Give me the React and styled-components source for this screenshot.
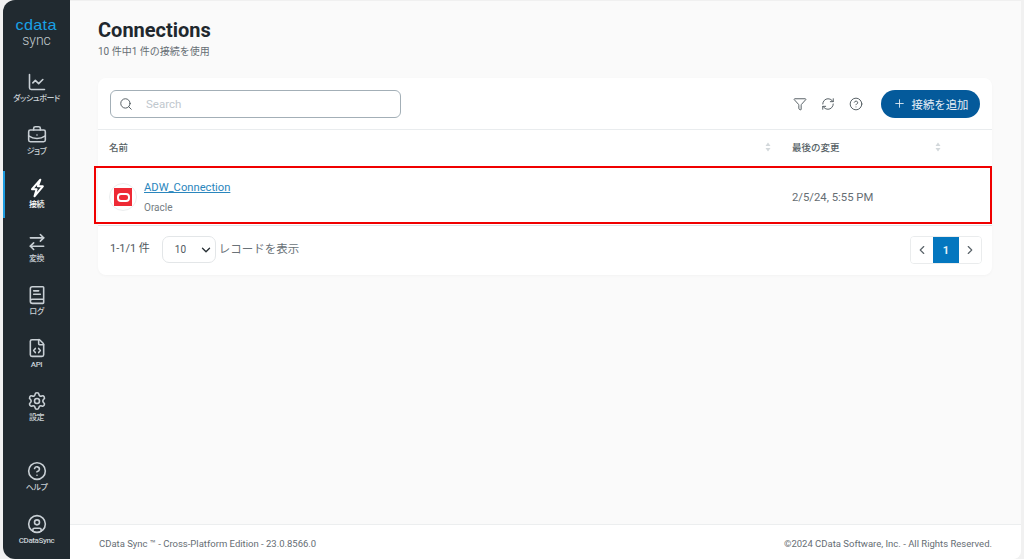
import React from 'react';
import styled, { createGlobalStyle } from 'styled-components';
import {
  ChartLine, BriefcaseBusiness, ArrowRightLeft, BookText, FileCode, Settings,
  CircleHelp, CircleUser, Search, Funnel, RefreshCw, Plus, ChevronDown, ChevronLeft, ChevronRight,
} from 'lucide-react';

const font = `Roboto, 'Noto Sans CJK JP', sans-serif`;

const Global = createGlobalStyle`
  html, body { margin: 0; padding: 0; background: #fff; }
  #root { height: 559px; overflow: hidden; }
  * { box-sizing: border-box; }
  body { font-family: ${font}; }
`;

const Shell = styled.div`
  display: flex;
  height: 559px;
  width: 1024px;
  padding: 0 3px 0 3px;
  background: #f1f1f1;
`;

const Sidebar = styled.nav`
  width: 67px;
  flex: none;
  display: flex;
  flex-direction: column;
  background: #212a30;
  border-radius: 12px 0 0 12px;
`;

const Brand = styled.div`
  height: 55px;
  padding-top: 17px;
  display: flex;
  flex-direction: column;
  align-items: center;
`;

const BrandMark = styled.span`
  font-family: 'Liberation Sans', sans-serif;
  font-size: 15px;
  line-height: 15px;
  font-weight: 400;
  letter-spacing: 0.3px;
  color: #19a1e6;
  transform: scaleX(1.08);
`;

const BrandSub = styled.span`
  font-size: 14px;
  line-height: 16px;
  font-weight: 300;
  color: #c3cacf;
`;

const NavList = styled.div`
  display: flex;
  flex-direction: column;
  padding-top: 6px;
`;

const NavItem = styled.a`
  position: relative;
  height: 53.3px;
  display: flex;
  flex-direction: column;
  align-items: center;
  justify-content: center;
  gap: 1px;
  color: ${(p) => (p.$active ? '#ffffff' : '#c9d0d5')};
  font-size: 8px;
  line-height: 11px;
  font-weight: 500;
  letter-spacing: -0.4px;
  font-feature-settings: 'palt';

  ${(p) => p.$active && `
    &::before {
      content: '';
      position: absolute;
      left: 0;
      top: 3px;
      bottom: 3px;
      width: 2px;
      background: #1c9ce0;
    }
  `}
`;

const NavBottom = styled(NavList)`
  margin-top: auto;
  padding: 0 0 2px;
`;

const Main = styled.main`
  flex: 1;
  min-width: 0;
  display: flex;
  flex-direction: column;
  background: #fafafa;
  border-top: 1px solid #f0f0f0;
  border-radius: 0 0 8px 0;
  overflow: hidden;
`;

const Content = styled.div`
  flex: 1;
  padding: 17px 29px 0 28px;
`;

const Title = styled.h1`
  margin: 0;
  font-size: 20px;
  line-height: 24px;
  font-weight: 700;
  color: #1f282e;
`;

const Subtitle = styled.p`
  margin: 3px 0 0;
  font-size: 10px;
  line-height: 14px;
  color: #666e74;
`;

const Card = styled.section`
  margin-top: 19px;
  background: #fff;
  border-radius: 8px;
  box-shadow: 0 1px 3px rgba(0, 0, 0, 0.03);
`;

const Toolbar = styled.div`
  height: 52px;
  padding: 0 12px 0 12px;
  display: flex;
  align-items: center;
  border-bottom: 1px solid #e9ecee;
`;

const SearchBox = styled.label`
  width: 291px;
  height: 28px;
  display: flex;
  align-items: center;
  gap: 13px;
  padding-left: 8px;
  border: 1px solid #a3afb7;
  border-radius: 6px;
  color: #4e575d;
`;

const SearchInput = styled.input`
  flex: 1;
  min-width: 0;
  border: 0;
  outline: 0;
  padding: 0;
  background: transparent;
  font-family: ${font};
  font-size: 11.5px;
  &::placeholder { color: #bfc8ce; }
`;

const Tools = styled.div`
  margin-left: auto;
  display: flex;
  align-items: center;
  gap: 14px;
  color: #4e575d;
`;

const AddButton = styled.button`
  height: 28px;
  width: 99px;
  margin-left: 4px;
  display: flex;
  align-items: center;
  justify-content: center;
  gap: 6px;
  padding: 0;
  border: 0;
  border-radius: 14px;
  background: #045a9b;
  color: #e8f0f6;
  font-family: ${font};
  font-size: 11.4px;
`;

const Row = styled.div`
  display: grid;
  grid-template-columns: 694px 1fr;
  position: relative;
`;

const HeadRow = styled(Row)`
  height: 36px;
  padding-bottom: 2px;
  align-items: center;
`;

const HeadCell = styled.div`
  display: flex;
  align-items: center;
  justify-content: space-between;
  padding: 0 ${(p) => p.$right}px 0 ${(p) => p.$left}px;
  font-size: 9.5px;
  font-weight: 500;
  color: #565f65;
`;

const BodyRow = styled(Row)`
  height: 60px;
  padding-top: 3px;
  align-items: center;
  border-bottom: 1px solid #dfe3e6;
`;

const Highlight = styled.div`
  position: absolute;
  left: -4px;
  right: 0;
  top: 0;
  bottom: 1px;
  border: 2px solid #f00000;
  pointer-events: none;
`;

const NameCell = styled.div`
  display: flex;
  align-items: center;
  gap: 7px;
  padding-left: 11px;
`;

const LogoCircle = styled.div`
  width: 28px;
  height: 28px;
  display: flex;
  align-items: center;
  justify-content: center;
  border: 1px solid #eceeef;
  border-radius: 50%;
`;

const OracleBadge = styled.div`
  width: 18px;
  height: 18px;
  display: flex;
  align-items: center;
  justify-content: center;
  background: #ee2a35;
`;

const OracleRing = styled.div`
  width: 13px;
  height: 9px;
  border: 2px solid #fff;
  border-radius: 4px;
`;

const NameStack = styled.div`
  display: flex;
  flex-direction: column;
  gap: 5px;
`;

const ConnLink = styled.a`
  font-size: 11.2px;
  line-height: 16px;
  color: #2a86bd;
  text-decoration: underline;
`;

const ConnType = styled.span`
  font-size: 10px;
  line-height: 14px;
  color: #747c82;
`;

const DateCell = styled.div`
  font-size: 11.3px;
  color: #656d73;
`;

const Pager = styled.div`
  height: 49px;
  padding: 10px 10px 0 12px;
  display: flex;
  align-items: flex-start;
  font-size: 11px;
  color: #4f585e;
`;

const PagerText = styled.span`
  line-height: 26px;
`;

const PageSize = styled.div`
  width: 54px;
  height: 27px;
  margin: 0 3px 0 12px;
  padding: 0 2px 0 12px;
  display: flex;
  align-items: center;
  justify-content: space-between;
  border: 1px solid #e3e6e8;
  border-radius: 7px;
  font-size: 10px;
  color: #4f585e;
`;

const PageText = styled(PagerText)`
  color: #6a7278;
  font-size: 11.5px;
`;

const PageButtons = styled.div`
  margin-left: auto;
  display: flex;
  height: 28px;
  border: 1px solid #eaeced;
  border-radius: 4px;
  overflow: hidden;
`;

const PageButton = styled.div`
  width: ${(p) => (p.$active ? 26 : 22)}px;
  display: flex;
  align-items: center;
  justify-content: center;
  background: ${(p) => (p.$active ? '#0477bf' : '#fff')};
  color: ${(p) => (p.$active ? '#e4eff7' : '#5b646a')};
  font-size: 11px;
  font-weight: 700;
`;

const Footer = styled.footer`
  height: 35px;
  flex: none;
  padding: 2px 29px 0 29px;
  display: flex;
  align-items: center;
  justify-content: space-between;
  background: #fff;
  border-top: 1px solid #eceeef;
  font-size: 9.5px;
  color: #666e74;
`;

const SortIcon = () => (
  <svg width="6" height="10" viewBox="0 0 6 10" fill="#d3d8db">
    <path d="M3 0.5 5.5 4h-5zM3 9.5.5 6h5z" />
  </svg>
);

const BoltIcon = ({ size, strokeWidth }) => (
  <svg width={size} height={size} viewBox="0 0 24 24" fill="none" stroke="currentColor"
    strokeWidth={strokeWidth} strokeLinejoin="round" strokeLinecap="round">
    <path d="M16 2 6 13.5h5.5L9 22l10-12h-6z" />
  </svg>
);

const nav = [
  { icon: ChartLine, label: 'ダッシュボード' },
  { icon: BriefcaseBusiness, label: 'ジョブ' },
  { icon: BoltIcon, label: '接続', active: true },
  { icon: ArrowRightLeft, label: '変換' },
  { icon: BookText, label: 'ログ' },
  { icon: FileCode, label: 'API' },
  { icon: Settings, label: '設定' },
];

const navBottom = [
  { icon: CircleHelp, label: 'ヘルプ' },
  { icon: CircleUser, label: 'CDataSync' },
];

const renderNav = ({ icon: Icon, label, active }) => (
  <NavItem key={label} $active={active}>
    <Icon size={20} strokeWidth={active ? 2.4 : 1.9} />
    {label}
  </NavItem>
);

export default function App() {
  return (
    <Shell>
      <Global />
      <Sidebar>
        <Brand>
          <BrandMark>cdata</BrandMark>
          <BrandSub>sync</BrandSub>
        </Brand>
        <NavList>{nav.map(renderNav)}</NavList>
        <NavBottom>{navBottom.map(renderNav)}</NavBottom>
      </Sidebar>
      <Main>
        <Content>
          <Title>Connections</Title>
          <Subtitle>10 件中1 件の接続を使用</Subtitle>
          <Card>
            <Toolbar>
              <SearchBox>
                <Search size={14} strokeWidth={1.6} />
                <SearchInput placeholder="Search" />
              </SearchBox>
              <Tools>
                <Funnel size={14} strokeWidth={1.6} />
                <RefreshCw size={14} strokeWidth={1.6} />
                <CircleHelp size={14} strokeWidth={1.6} />
                <AddButton>
                  <Plus size={13} strokeWidth={1.6} />
                  接続を追加
                </AddButton>
              </Tools>
            </Toolbar>
            <HeadRow>
              <HeadCell $left={11} $right={21}>名前<SortIcon /></HeadCell>
              <HeadCell $left={0} $right={51}>最後の変更<SortIcon /></HeadCell>
            </HeadRow>
            <BodyRow>
              <NameCell>
                <LogoCircle>
                  <OracleBadge><OracleRing /></OracleBadge>
                </LogoCircle>
                <NameStack>
                  <ConnLink>ADW_Connection</ConnLink>
                  <ConnType>Oracle</ConnType>
                </NameStack>
              </NameCell>
              <DateCell>2/5/24, 5:55 PM</DateCell>
              <Highlight />
            </BodyRow>
            <Pager>
              <PagerText>1-1/1 件</PagerText>
              <PageSize>10<ChevronDown size={14} strokeWidth={2.4} color="#2b3338" /></PageSize>
              <PageText>レコードを表示</PageText>
              <PageButtons>
                <PageButton><ChevronLeft size={14} strokeWidth={2} /></PageButton>
                <PageButton $active>1</PageButton>
                <PageButton><ChevronRight size={14} strokeWidth={2} /></PageButton>
              </PageButtons>
            </Pager>
          </Card>
        </Content>
        <Footer>
          <span>CData Sync ™ - Cross-Platform Edition - 23.0.8566.0</span>
          <span>©2024 CData Software, Inc. - All Rights Reserved.</span>
        </Footer>
      </Main>
    </Shell>
  );
}
